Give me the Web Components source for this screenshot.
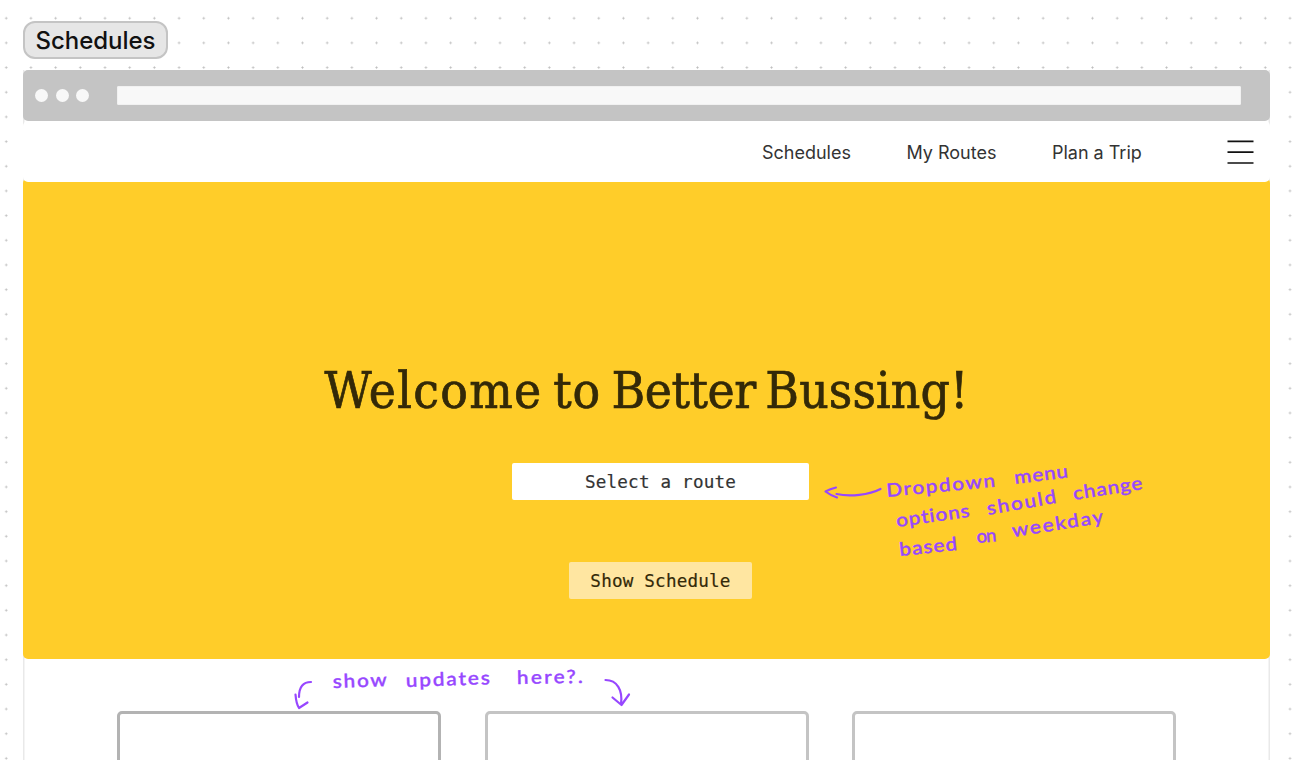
<!DOCTYPE html>
<html lang="en">
<head>
<meta charset="utf-8">
<title>Better Bussing</title>
<style>
html, body { margin: 0; height: 100%; overflow: hidden; background: #fff; }
</style>
</head>
<body>
<wire-board></wire-board>
<script>
const define = (name, html) => {
  const t = document.createElement('template');
  t.innerHTML = html;
  customElements.define(name, class extends HTMLElement {
    constructor() {
      super();
      this.attachShadow({ mode: 'open' }).appendChild(t.content.cloneNode(true));
    }
  });
};

define('frame-label', `<style>
:host { display: flex; align-items: center; justify-content: center; box-sizing: border-box; width: 145px; height: 38px; padding-top: 2px; border: 2px solid #c4c4c4; border-radius: 12px; background: #e6e6e6; color: #111; font: 500 24px/32px Inter, sans-serif; letter-spacing: -.05px; }
</style><slot></slot>`);

define('browser-bar', `<style>
:host { display: flex; align-items: center; box-sizing: border-box; height: 51px; padding: 0 29px 0 12px; border-radius: 5px; background: #c4c4c4; }
.dots { display: flex; gap: 7.6px; margin-right: 28px; }
i { width: 13px; height: 13px; border-radius: 50%; background: #f8f8f8; }
.url { flex: 1; height: 19px; border-radius: 2px; background: #f8f8f8; box-shadow: inset 0 0 0 1px #f1f1f1; }
</style><div class="dots"><i></i><i></i><i></i></div><div class="url"></div>`);

define('nav-bar', `<style>
:host { position: relative; display: flex; align-items: center; justify-content: flex-end; box-sizing: border-box; height: 61px; padding-right: 16px; border-radius: 5px; background: #fff; color: #333; font: 400 18px/24px Inter, sans-serif; }
nav { display: flex; gap: 55.5px; margin-right: 85.2px; padding-top: 2px; }
svg { display: block; }
</style><nav><slot></slot></nav>
<svg width="27" height="26" viewBox="0 0 27 26"><path d="M.5 2.4h26M.5 13.2h26M.5 24h26" stroke="#111" stroke-width="1.7"/></svg>`);

define('route-field', `<style>
:host { display: flex; align-items: center; justify-content: center; width: var(--w); height: 37px; border-radius: 2px; background: var(--bg, #fff); color: var(--ink, #333); font: 400 17.6px/24px "DejaVu Sans Mono", monospace; letter-spacing: .2px; -webkit-text-stroke: .2px currentColor; }
</style><slot></slot>`);

define('hero-panel', `<style>
:host { display: flex; flex-direction: column; align-items: center; box-sizing: border-box; height: 481px; margin-top: -4px; padding-top: 177px; border-radius: 5px; background: #ffcd29; }
h1 { margin: 0; height: 72px; font: 400 51px/72px "DejaVu Serif Condensed", "DejaVu Serif", serif; font-stretch: condensed; color: #332908; white-space: nowrap; letter-spacing: .75px; word-spacing: -4.500px; -webkit-text-stroke: .7px currentColor; }
.form { display: flex; flex-direction: column; align-items: center; gap: 62px; margin-top: 36px; padding-left: 28px; }
</style><h1><slot name="title"></slot></h1><div class="form"><slot></slot></div>`);

define('update-card', `<style>
:host { display: block; box-sizing: border-box; height: 120px; border: 3px solid var(--line, #c4c4c4); border-radius: 5px; background: #fff; }
</style>`);

define('ink-notes', `<style>
:host { position: absolute; left: 0; top: 0; pointer-events: none; }
svg { display: block; }
text { font: 500 18.5px Lato, sans-serif; font-variant-ligatures: none; fill: #9747ff; stroke: #9747ff; stroke-width: .4; }
path { fill: none; stroke: #9747ff; stroke-width: 2.2; stroke-linecap: round; stroke-linejoin: round; }
</style><svg width="1293" height="760" viewBox="0 0 1293 760">
<path d="M836 487.5Q830 489 825.500 491.500Q830 495 837 497.500M836.500 494C850 497 869 495 880.500 489"/>
<path d="M311 682C302 682 299 688 299 697M295.500 694.500C296 701 297 705 299 708L307.500 702.500"/>
<path d="M605.500 680C617 680 623 690 621 704.500M612.500 697.500L621.500 705L629 694.500"/>
<g id="words"></g></svg>`);
const words = [
  ['Dropdown', 887, 497, 109, -5.5], ['menu', 1015, 484, 54, -7],
  ['options', 897, 527, 74, -8], ['should', 988, 515, 70, -10], ['change', 1074, 500, 70, -9],
  ['based', 900, 556, 58, -6], ['on', 977, 543, 20, -5], ['weekday', 1013, 537, 92, -9],
  ['show', 333, 688, 54, -2], ['updates', 406, 687, 84, -2], ['here?.', 517, 684, 66, -1]
];
customElements.define('ink-layer', class extends customElements.get('ink-notes') {
  constructor() {
    super();
    const g = this.shadowRoot.getElementById('words');
    for (const [word, x, y, w, a] of words) {
      const t = document.createElementNS('http://www.w3.org/2000/svg', 'text');
      const stretch = word === 'on' ? 1 : 1.12;
      t.textContent = word;
      t.setAttribute('textLength', w / stretch);
      t.setAttribute('lengthAdjust', 'spacing');
      t.setAttribute('transform', `translate(${x} ${y}) rotate(${a}) scale(${stretch} 1)`);
      g.appendChild(t);
    }
  }
});

define('wire-board', `<style>
:host { position: relative; display: block; box-sizing: border-box; width: 1293px; height: 760px; padding: 21px 23px 0; overflow: hidden; background: radial-gradient(circle at 50% 50%, #bdbdbd 0 .75px, transparent 1.4px) -6.100px 5.900px / 24.69px 24.68px #fff; }
main { margin-top: 11px; box-sizing: border-box; height: 700px; background: #fff; box-shadow: inset 1.500px 0 #e9e9e9, inset -1.500px 0 #e9e9e9; }
nav-bar { z-index: 1; }
.loose { letter-spacing: 1.3px; }
.tight { letter-spacing: -.45px; }
.snug { letter-spacing: .1px; }
.cards { display: grid; grid-template-columns: repeat(3, 324px); gap: 43.500px; padding: 52px 0 0 94px; }
</style>
<frame-label>Schedules</frame-label>
<main>
<browser-bar></browser-bar>
<nav-bar><span>Schedules</span><span>My Routes</span><span>Plan a Trip</span></nav-bar>
<hero-panel><span slot="title"><span class="loose">Welcome</span> to <span class="tight">Better </span><span class="snug">Bussing!</span></span>
<route-field style="--w:297px">Select a route</route-field>
<route-field style="--w:183px;--bg:#ffe6a1;--ink:#332908">Show Schedule</route-field></hero-panel>
<div class="cards"><update-card style="--line:#b3b3b3"></update-card><update-card></update-card><update-card></update-card></div>
</main>
<ink-layer></ink-layer>`);
</script>
</body>
</html>
